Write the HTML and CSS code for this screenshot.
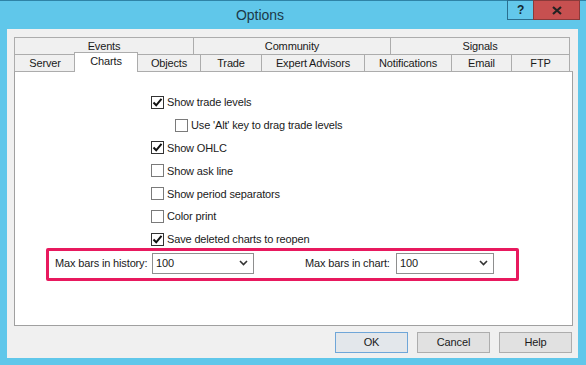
FILE: index.html
```html
<!DOCTYPE html>
<html>
    <head>
        <title>Options</title>
        <link rel="stylesheet" href="styles.css">
    </head>
    <body>
        <div class="window">
            <div class="titlebar">
                <div class="title">Options</div>
                <div class="controls">
                    <div class="btn-help">?</div>
                    <div class="btn-close">
                        <svg width="10" height="9" viewBox="0 0 10 9"><path d="M1 1 L9 8 M9 1 L1 8" stroke="#222" stroke-width="2.2" fill="none"/></svg>
                    </div>
                </div>
            </div>
            <div class="client">
                <div class="tabs">
                    <div class="tab-row">
                        <div class="tab w-events">Events</div>
                        <div class="tab w-community">Community</div>
                        <div class="tab w-signals last">Signals</div>
                    </div>
                    <div class="tab-row">
                        <div class="tab w-server">Server</div>
                        <div class="tab w-charts selected">Charts</div>
                        <div class="tab w-objects">Objects</div>
                        <div class="tab w-trade">Trade</div>
                        <div class="tab w-experts">Expert Advisors</div>
                        <div class="tab w-notif">Notifications</div>
                        <div class="tab w-email">Email</div>
                        <div class="tab w-ftp last">FTP</div>
                    </div>
                </div>
                <div class="panel">
                    <div class="options">
                        <label class="check checked">
                            <span class="box"><svg width="11" height="11" viewBox="0 0 11 11"><path d="M1.5 5.5 L4.2 8.3 L9.5 1.8" stroke="#111" stroke-width="2" fill="none"/></svg></span>
                            Show trade levels
                        </label>
                        <label class="check sub">
                            <span class="box"></span>
                            Use 'Alt' key to drag trade levels
                        </label>
                        <label class="check checked">
                            <span class="box"><svg width="11" height="11" viewBox="0 0 11 11"><path d="M1.5 5.5 L4.2 8.3 L9.5 1.8" stroke="#111" stroke-width="2" fill="none"/></svg></span>
                            Show OHLC
                        </label>
                        <label class="check">
                            <span class="box"></span>
                            Show ask line
                        </label>
                        <label class="check">
                            <span class="box"></span>
                            Show period separators
                        </label>
                        <label class="check">
                            <span class="box"></span>
                            Color print
                        </label>
                        <label class="check checked">
                            <span class="box"><svg width="11" height="11" viewBox="0 0 11 11"><path d="M1.5 5.5 L4.2 8.3 L9.5 1.8" stroke="#111" stroke-width="2" fill="none"/></svg></span>
                            Save deleted charts to reopen
                        </label>
                    </div>
                    <div class="bars">
                        <span class="label label-history">Max bars in history:</span>
                        <div class="select select-history">
                            <span>100</span>
                            <svg width="9" height="6" viewBox="0 0 9 6"><path d="M1 1 L4.5 4.5 L8 1" stroke="#333" stroke-width="1.6" fill="none"/></svg>
                        </div>
                        <span class="label label-chart">Max bars in chart:</span>
                        <div class="select select-chart">
                            <span>100</span>
                            <svg width="9" height="6" viewBox="0 0 9 6"><path d="M1 1 L4.5 4.5 L8 1" stroke="#333" stroke-width="1.6" fill="none"/></svg>
                        </div>
                    </div>
                </div>
                <div class="buttons">
                    <div class="button default">OK</div>
                    <div class="button">Cancel</div>
                    <div class="button">Help</div>
                </div>
            </div>
        </div>
    </body>
</html>
```

FILE: styles.css
```css
body, html {
    height: 100%;
}
body {
    margin: 0;
    padding: 0;
    overflow: hidden;
    font-family: "Liberation Sans", Arial, sans-serif;
    font-size: 11px;
    letter-spacing: -0.15px;
    color: #1a1a1a;
}

.window {
    height: 100%;
    box-sizing: border-box;
    background-color: #60c7ea;
    border-top: 1px solid #2f83a6;
    display: flex;
    flex-direction: column;
}

.titlebar {
    height: 28px;
    display: flex;
    flex-direction: row;
}

.title {
    flex: 1;
    text-align: center;
    padding-left: 13px;
    font-size: 14px;
    letter-spacing: 0;
    line-height: 28px;
    color: #1c3948;
}

.controls {
    display: flex;
    flex-direction: row;
    align-items: flex-start;
    margin-right: 6px;
    margin-top: -1px;
}

.btn-help {
    width: 26px;
    height: 20px;
    box-sizing: border-box;
    border: 1px solid #2a6f90;
    border-right: none;
    background-color: #63c8eb;
    text-align: center;
    font-weight: bold;
    font-size: 12px;
    line-height: 18px;
    color: #15262e;
}

.btn-close {
    width: 47px;
    height: 20px;
    box-sizing: border-box;
    border: 1px solid #8a3a3a;
    background-color: #c75050;
    display: flex;
    align-items: center;
    justify-content: center;
}

.client {
    flex: 1;
    margin: 0 8px 7px 7px;
    padding: 8px 5px 5px 7px;
    background-color: #f0f0f0;
    display: flex;
    flex-direction: column;
}

.tabs {
    display: flex;
    flex-direction: column;
}

.tab-row {
    display: flex;
    flex-direction: row;
    height: 17px;
}

.tab {
    box-sizing: border-box;
    height: 17px;
    border-top: 1px solid #acacac;
    border-left: 1px solid #acacac;
    background-color: #f0f0f0;
    text-align: center;
    line-height: 16px;
}
.tab.last {
    border-right: 1px solid #acacac;
}
.tab.selected {
    position: relative;
    z-index: 1;
    height: 20px;
    margin-top: -2px;
    margin-left: -1px;
    margin-right: -1px;
    border-right: 1px solid #acacac;
    background-color: #fff;
    line-height: 17px;
}

.w-events { width: 179px; }
.w-community { width: 197px; }
.w-signals { width: 180px; }
.w-server { width: 61px; }
.w-charts { width: 64px; }
.w-objects { width: 63px; }
.w-trade { width: 61px; }
.w-experts { width: 103px; }
.w-notif { width: 87px; }
.w-email { width: 60px; }
.w-ftp { width: 59px; }

.panel {
    height: 255px;
    box-sizing: border-box;
    border: 1px solid #a0a0a0;
    border-top-color: #acacac;
    background-color: #fff;
    display: flex;
    flex-direction: column;
}

.options {
    padding: 19px 0 0 136px;
    display: flex;
    flex-direction: column;
}

.check {
    height: 22.8px;
    display: flex;
    flex-direction: row;
    align-items: center;
    gap: 3px;
}
.check.sub {
    padding-left: 24px;
}

.box {
    width: 13px;
    height: 13px;
    box-sizing: border-box;
    border: 1px solid #7a7a7a;
    background-color: #fff;
    display: flex;
    align-items: center;
    justify-content: center;
}
.check.checked .box {
    border-color: #333;
}

.bars {
    margin: -3px 0 0 31px;
    width: 473px;
    height: 33px;
    box-sizing: border-box;
    border: 3px solid #e8195e;
    border-radius: 2px;
    padding: 0 0 2px 6px;
    display: flex;
    flex-direction: row;
    align-items: center;
}

.label-history {
    width: 97px;
}
.label-chart {
    width: 91px;
    margin-left: 51px;
}

.select {
    height: 21px;
    box-sizing: border-box;
    border: 1px solid #8e8f8f;
    background-color: #fff;
    padding: 0 5px 0 3px;
    display: flex;
    flex-direction: row;
    align-items: center;
    justify-content: space-between;
}
.select-history {
    width: 102px;
}
.select-chart {
    width: 98px;
}

.buttons {
    margin-top: 6px;
    padding-right: 1px;
    display: flex;
    flex-direction: row;
    justify-content: flex-end;
    gap: 9px;
}

.button {
    width: 73px;
    height: 21px;
    box-sizing: border-box;
    border: 1px solid #adadad;
    background-color: #e1e1e1;
    text-align: center;
    line-height: 19px;
}
.button.default {
    border-color: #6fa6d8;
    background-color: #e3e7eb;
}
```
